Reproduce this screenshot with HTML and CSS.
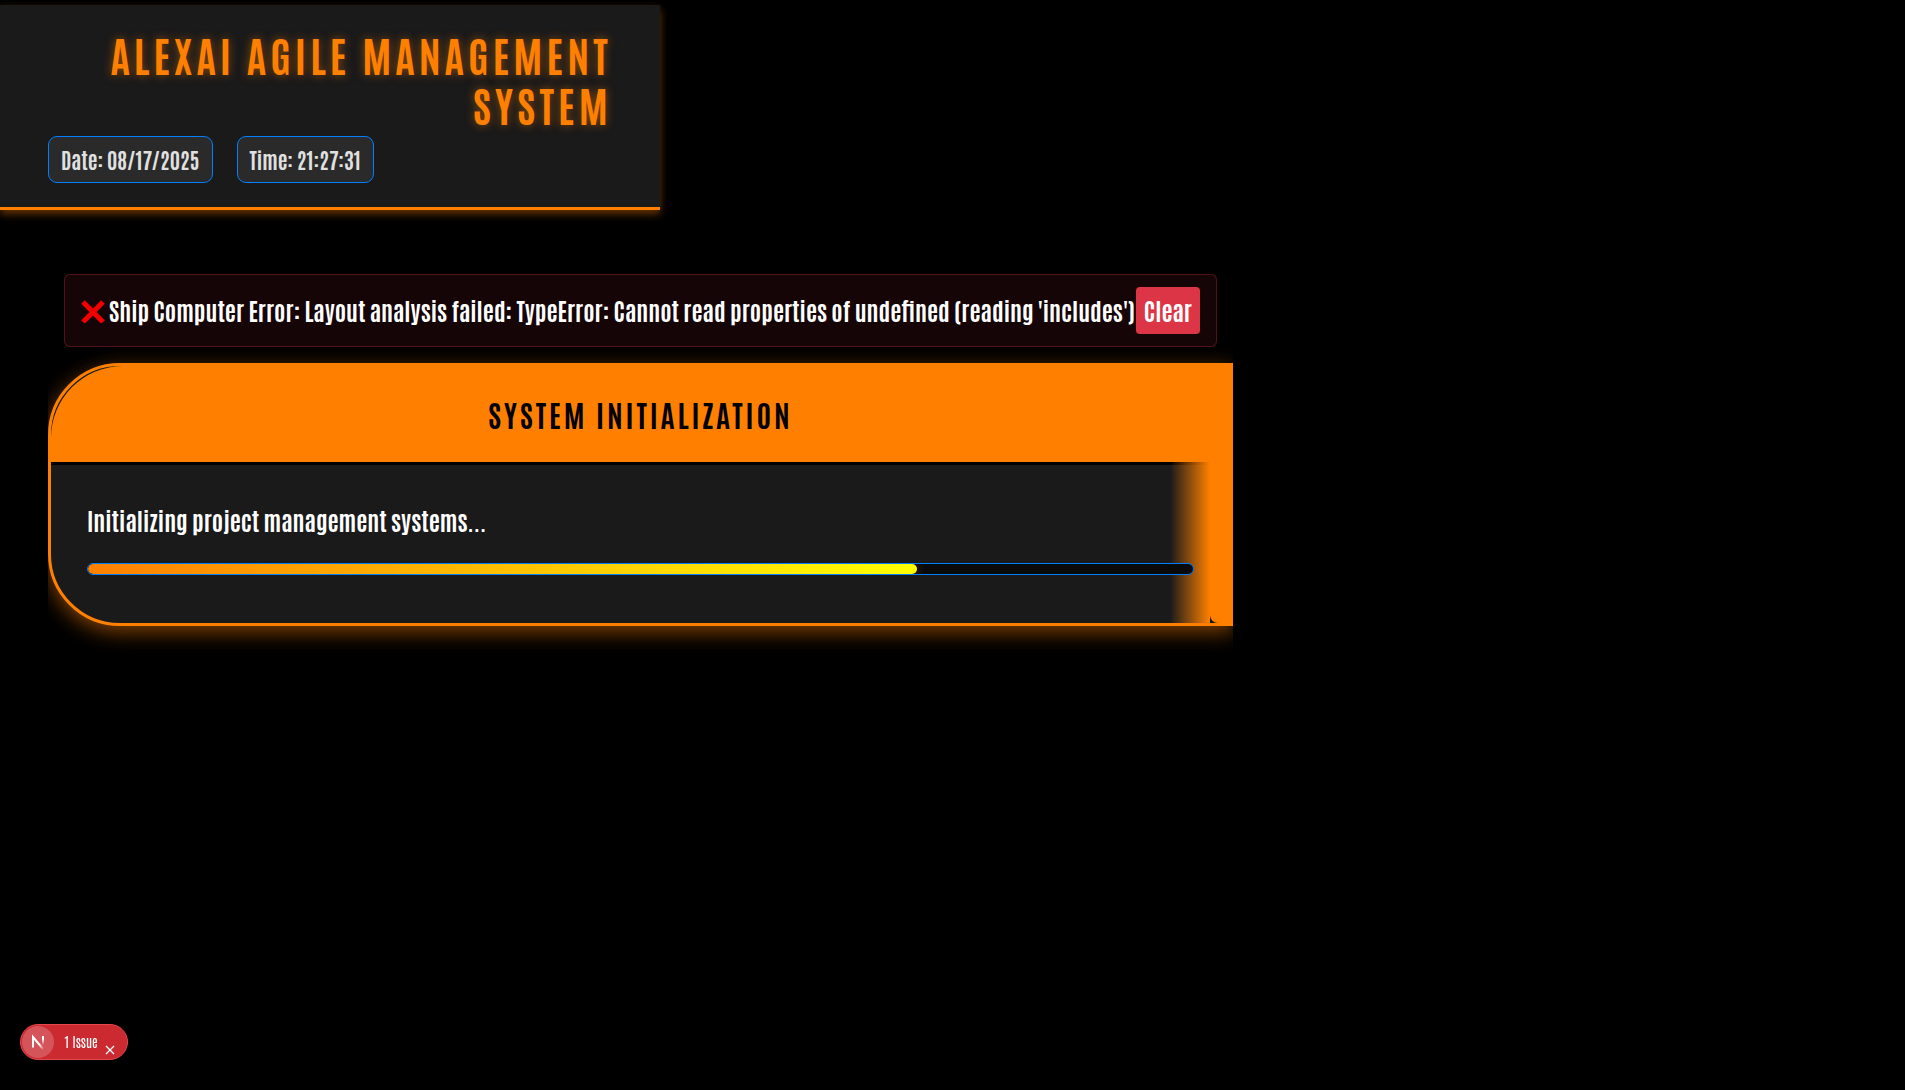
FILE: index.html
```html
<!DOCTYPE html>
<html lang="en">
<head>
<meta charset="utf-8">
<meta name="viewport" content="width=device-width, initial-scale=1">
<title>AlexAI Agile Management System</title>
<link rel="stylesheet" href="styles.css">
</head>
<body>
<header class="topbar">
  <h1 class="topbar-title">AlexAI Agile Management System</h1>
  <div class="topbar-status">
    <span class="pill">Date: 08/17/2025</span>
    <span class="pill">Time: 21:27:31</span>
  </div>
</header>

<main class="content">
  <div class="alert" role="alert">
    <svg class="alert-icon" viewBox="0 0 24 24" aria-hidden="true"><path d="M2 3 22 23M22 3 2 23" fill="none" stroke="#f20000" stroke-width="5"/></svg>
    <span class="alert-text">Ship Computer Error: Layout analysis failed: TypeError: Cannot read properties of undefined (reading 'includes')</span>
    <button class="alert-clear" type="button">Clear</button>
  </div>

  <section class="panel">
    <h2 class="panel-title">System Initialization</h2>
    <div class="panel-body">
      <p class="panel-text">Initializing project management systems...</p>
      <div class="progress" role="progressbar" aria-label="Initialization" aria-valuenow="75" aria-valuemin="0" aria-valuemax="100">
        <div class="progress-fill" style="width: 75%"></div>
      </div>
    </div>
  </section>
</main>

<div class="issues">
  <button class="issues-logo" type="button" aria-label="Open dev tools">
    <svg viewBox="0 0 32 32" aria-hidden="true">
      <defs>
        <linearGradient id="diag" x1="0" y1="0" x2="1" y2="1"><stop offset="0.6" stop-color="#fff"/><stop offset="1" stop-color="#fff" stop-opacity="0"/></linearGradient>
        <linearGradient id="stem" x1="0" y1="0" x2="0" y2="1"><stop offset="0.3" stop-color="#fff"/><stop offset="1" stop-color="#fff" stop-opacity="0"/></linearGradient>
      </defs>
      <path d="M11 21.500V11L21.500 23.500" fill="none" stroke="url(#diag)" stroke-width="2"/>
      <rect x="20" y="10" width="2" height="9" fill="url(#stem)"/>
    </svg>
  </button>
  <button class="issues-label" type="button">1 Issue</button>
  <button class="issues-close" type="button" aria-label="Dismiss">
    <svg viewBox="0 0 12 12" aria-hidden="true"><path d="M2 2 10 10M10 2 2 10" fill="none" stroke="#fff" stroke-width="1.300"/></svg>
  </button>
</div>
</body>
</html>
```
FILE: styles.css
```css
:root {
  --orange: #ff8000;
  --blue: #0080ff;
  --surface: #1a1a1a;
}

* { box-sizing: border-box; }

body {
  margin: 0;
  padding-top: 5px;
  min-height: 100vh;
  background: #000;
  color: #fff;
  font-family: Antonio, "Roboto Condensed", sans-serif;
  font-size: 24px;
  font-weight: 700;
}

button {
  border: 0;
  margin: 0;
  padding: 0;
  background: none;
  color: inherit;
  font: inherit;
}

.topbar {
  width: 660px;
  max-width: 100%;
  padding: 24px 48px;
  background: var(--surface);
  border-bottom: 3px solid var(--orange);
  box-shadow: 0 4px 8px rgba(255, 128, 0, 0.4);
}

.topbar-title {
  margin: 0 0 7px;
  color: var(--orange);
  font-size: 42px;
  line-height: 50px;
  letter-spacing: 0.1em;
  text-align: right;
  text-transform: uppercase;
  text-shadow: 0 0 10px rgba(255, 128, 0, 0.5);
}

.topbar-status {
  display: flex;
  gap: 24px;
}

.pill {
  padding: 8px 12px;
  border: 1px solid var(--blue);
  border-radius: 9px;
  background: #2a2a2a;
  color: #e0e0e0;
  font-size: 21px;
  line-height: 29px;
}

.content {
  width: 1185px;
  max-width: 100%;
  margin: 64px 0 0 48px;
  padding-bottom: 40px;
  overflow: hidden;
}

.alert {
  display: flex;
  align-items: center;
  margin: 0 16px 16px;
  padding: 12px 16px;
  border: 1px solid rgba(220, 53, 69, 0.3);
  border-radius: 6px;
  background: rgba(220, 53, 69, 0.1);
}

.alert-icon {
  flex: none;
  width: 24px;
  height: 24px;
  margin-right: 4px;
}

.alert-text {
  flex: 1;
  padding-bottom: 2px;
  line-height: 29px;
}

.alert-clear {
  padding: 4px 8px 6px;
  border-radius: 4px;
  background: #dc3545;
  line-height: 37px;
}

.panel {
  position: relative;
  border: 3px solid var(--orange);
  border-radius: 72px 0 0 72px;
  background: var(--surface);
  box-shadow: 0 6px 20px rgba(255, 128, 0, 0.5);
}

/* Glowing rail along the right edge of the panel */
.panel::before,
.panel::after {
  content: "";
  position: absolute;
  top: 0;
  bottom: 0;
}

.panel::before {
  right: 20px;
  width: 40px;
  background: linear-gradient(to right, transparent, var(--orange));
}

.panel::after {
  right: 0;
  width: 20px;
  border-radius: 0 0 0 8px;
  background: var(--orange);
}

.panel-title {
  margin: 0;
  padding: 24px;
  border-bottom: 3px solid #000;
  border-radius: 72px 0 0 0;
  background: var(--orange);
  color: #000;
  font-size: 30px;
  line-height: 48px;
  letter-spacing: 0.1em;
  text-align: center;
  text-transform: uppercase;
}

.panel-body { padding: 36px 36px 48px; }

.panel-text {
  margin: 0 0 24px;
  line-height: 38px;
}

.progress {
  position: relative;
  z-index: 1;
  height: 12px;
  border: 1px solid var(--blue);
  border-radius: 6px;
  background: #0a0a0a;
  overflow: hidden;
}

.progress-fill {
  height: 100%;
  border-radius: 6px;
  background: linear-gradient(to right, var(--orange), #ff0);
  box-shadow: 0 0 12px rgba(255, 128, 0, 0.3);
}

.issues {
  position: fixed;
  left: 20px;
  bottom: 30px;
  display: flex;
  align-items: center;
  height: 36px;
  padding: 0 11px 0 1px;
  border: 1px solid #e5484d;
  border-radius: 18px;
  background: #ca2a30;
  font-size: 13px;
  font-weight: 400;
}

.issues-logo {
  width: 32px;
  height: 32px;
  border-radius: 50%;
  background: rgba(255, 255, 255, 0.2);
}

.issues-logo svg { display: block; }

.issues-label { margin: 0 6px 2px 10px; }

.issues-close {
  width: 12px;
  height: 12px;
  margin-top: 16px;
}

.issues-close svg { display: block; }
```
